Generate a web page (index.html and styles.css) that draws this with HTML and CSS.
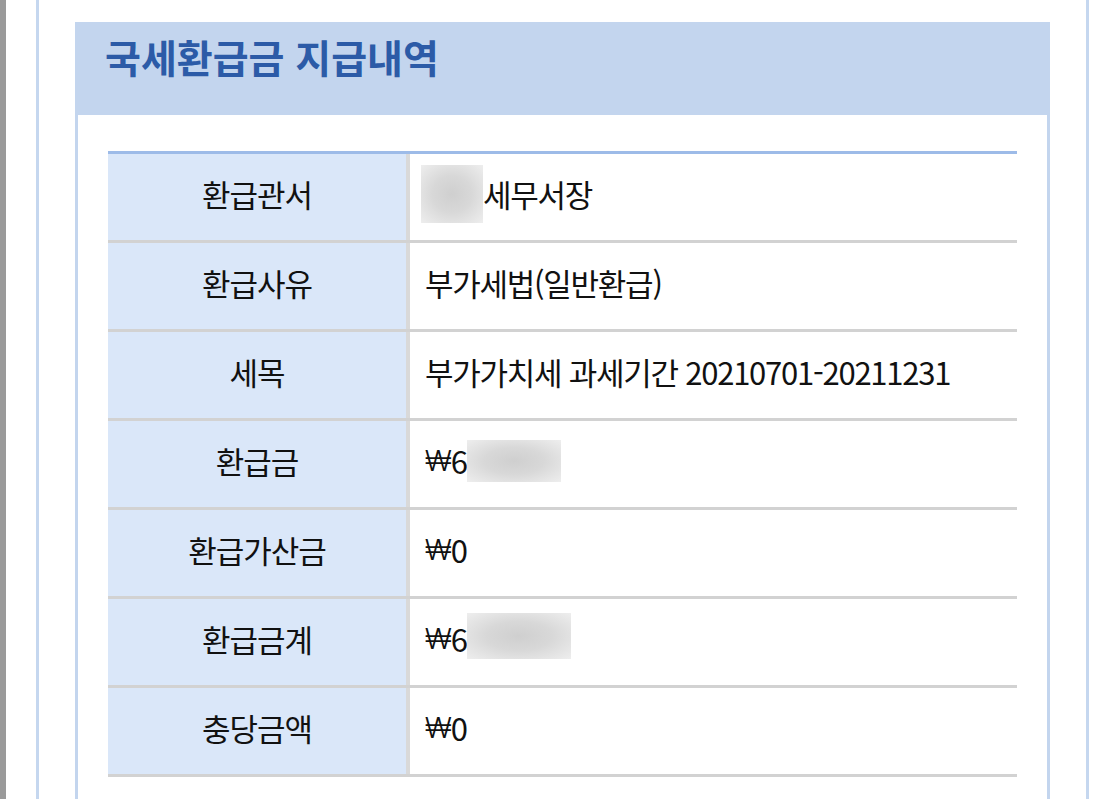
FILE: index.html
```html
<!DOCTYPE html>
<html lang="ko">
<head>
<meta charset="utf-8">
<title>국세환급금 지급내역</title>
<link rel="stylesheet" href="styles.css">
</head>
<body>
<div class="page">
  <div class="edge"></div>
  <div class="frame">
    <section class="card">
      <header class="card-head">
        <h1 class="title">국세환급금 지급내역</h1>
      </header>
      <div class="card-body">
        <div class="table">
          <div class="row">
            <div class="label">환급관서</div>
            <div class="value"><span class="blur blur-office"></span>세무서장</div>
          </div>
          <div class="row">
            <div class="label">환급사유</div>
            <div class="value">부가세법(일반환급)</div>
          </div>
          <div class="row">
            <div class="label">세목</div>
            <div class="value">부가가치세 과세기간 20210701-20211231</div>
          </div>
          <div class="row">
            <div class="label">환급금</div>
            <div class="value"><span class="won">₩</span>6<span class="blur blur-amount"></span></div>
          </div>
          <div class="row">
            <div class="label">환급가산금</div>
            <div class="value"><span class="won">₩</span>0</div>
          </div>
          <div class="row">
            <div class="label">환급금계</div>
            <div class="value"><span class="won">₩</span>6<span class="blur blur-total"></span></div>
          </div>
          <div class="row">
            <div class="label">충당금액</div>
            <div class="value"><span class="won">₩</span>0</div>
          </div>
        </div>
      </div>
    </section>
  </div>
</div>
</body>
</html>
```
FILE: styles.css
```css
html, body {
  margin: 0;
  padding: 0;
  background: #ffffff;
  overflow: hidden;
}

body {
  font-family: "Noto Sans CJK KR", "Noto Sans", sans-serif;
  color: #111111;
}

.page {
  display: flex;
  height: 799px;
}

.edge {
  width: 6px;
  background: #9a9a9a;
  flex: none;
}

.frame {
  margin-left: 30px;
  width: 975px;
  padding: 22px 36px 0;
  border-left: 3px solid #c5d7ef;
  border-right: 3px solid #c5d7ef;
  flex: none;
}

.card {
  border: 3px solid #c3d5ee;
  border-top: none;
  border-bottom: none;
  height: 100%;
  box-sizing: border-box;
}

.card-head {
  height: 93px;
  box-sizing: border-box;
  background: #c3d5ee;
  margin: 0 -3px;
  padding: 6px 30px 0;
}

.title {
  margin: 0;
  font-size: 39px;
  line-height: 56px;
  font-weight: 700;
  color: #2c5ba7;
}

.card-body {
  padding: 36px 30px 0;
}

.table {
  border-top: 3px solid #9dbbe8;
}

.row {
  display: flex;
  height: 89px;
  box-sizing: border-box;
  border-bottom: 3px solid #d2d2d2;
}

.label {
  width: 298px;
  flex: none;
  background: #dae7f9;
  border-right: 4px solid #d9d9d9;
  display: flex;
  align-items: center;
  justify-content: center;
  padding-bottom: 7px;
  font-size: 31px;
  letter-spacing: -1px;
}

.value {
  flex: 1;
  display: flex;
  align-items: center;
  padding-left: 15px;
  padding-bottom: 7px;
  font-size: 31px;
  letter-spacing: -1.25px;
}

.won {
  font-family: "Inter", "Noto Sans CJK KR", sans-serif;
  font-size: 29px;
  font-weight: 300;
  letter-spacing: -1px;
}

.blur {
  display: inline-block;
  background: radial-gradient(ellipse at center, #cfcfcf 0%, #d8d8d8 45%, #eeeeee 100%);
}

.blur-office {
  width: 62px;
  height: 58px;
  margin-left: -4px;
}

.blur-amount {
  width: 94px;
  height: 42px;
}

.blur-total {
  width: 104px;
  height: 46px;
  margin-top: -6px;
}
```
